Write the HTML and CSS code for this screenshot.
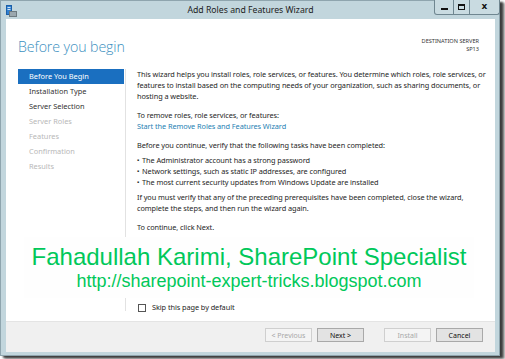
FILE: index.html
```html
<!DOCTYPE html>
<html lang="en">
    <head>
        <title>Add Roles and Features Wizard</title>
        <meta name="viewport" content="width=device-width, initial-scale=1">
        <link rel="stylesheet" href="styles.css">
    </head>
    <body>
        <div class="window">
            <header class="titlebar">
                <svg class="app-icon" width="11" height="12" viewBox="0 0 11 12">
                    <rect x="0.5" y="0.5" width="5" height="9" fill="#2f7fd0" stroke="#1b5fa8"/>
                    <rect x="1.5" y="2" width="3" height="1" fill="#cfe4f7"/>
                    <rect x="1.5" y="4" width="3" height="1" fill="#cfe4f7"/>
                    <rect x="3.5" y="6.5" width="7" height="5" fill="#9aa7ae" stroke="#6d7a80"/>
                </svg>
                <span class="title">Add Roles and Features Wizard</span>
                <div class="controls">
                    <span class="ctl"><i class="min"></i></span>
                    <span class="ctl"><i class="max"></i></span>
                    <span class="ctl close">x</span>
                </div>
            </header>
            <main class="client">
                <div class="page-head">
                    <h1>Before you begin</h1>
                    <div class="dest">DESTINATION SERVER<br>SP13</div>
                </div>
                <div class="wizard-body">
                    <nav class="steps">
                        <div class="step current">Before You Begin</div>
                        <div class="step">Installation Type</div>
                        <div class="step">Server Selection</div>
                        <div class="step off">Server Roles</div>
                        <div class="step off">Features</div>
                        <div class="step off">Confirmation</div>
                        <div class="step off">Results</div>
                    </nav>
                    <section class="content">
                        <p class="intro">This wizard helps you install roles, role services, or features. You determine which roles, role services, or features to install based on the computing needs of your organization, such as sharing documents, or hosting a website.</p>
                        <p>To remove roles, role services, or features:<br><a href="#">Start the Remove Roles and Features Wizard</a></p>
                        <p>Before you continue, verify that the following tasks have been completed:</p>
                        <ul>
                            <li>The Administrator account has a strong password</li>
                            <li>Network settings, such as static IP addresses, are configured</li>
                            <li>The most current security updates from Windows Update are installed</li>
                        </ul>
                        <p class="verify">If you must verify that any of the preceding prerequisites have been completed, close the wizard, complete the steps, and then run the wizard again.</p>
                        <p>To continue, click Next.</p>
                        <label class="skip"><span class="box"></span>Skip this page by default</label>
                    </section>
                </div>
            </main>
            <footer class="buttons">
                <button disabled>&lt; Previous</button>
                <button>Next &gt;</button>
                <button class="install" disabled>Install</button>
                <button>Cancel</button>
            </footer>
            <div class="watermark">
                <div class="name">Fahadullah Karimi, SharePoint Specialist</div>
                <div class="url">http://sharepoint-expert-tricks.blogspot.com</div>
            </div>
        </div>
    </body>
</html>
```

FILE: styles.css
```css
:root {
    --frame: #c2d6dd;
    --frame-edge: #8fa5ae;
    --heading: #3b8fc0;
    --selected: #1a6fc0;
    --text: #1e1e1e;
    --muted: #b8b8b8;
    --link: #1f7fb3;
    --footer: #f0f0f0;
    --green: #00c85a;
}
* { padding: 0; margin: 0; box-sizing: border-box; }
html, body { height: 100%; }
body { background: #fff; font-family: "Noto Sans", "Open Sans", sans-serif; color: var(--text); overflow: hidden; }

.window {
    position: relative;
    width: 500px; height: 356px;
    background: var(--frame);
    border: 1px solid var(--frame-edge);
    box-shadow: 3px 2px 2px rgba(40, 40, 40, 0.85), 5px 3px 2px rgba(80, 80, 80, 0.5);
    display: flex; flex-direction: column;
    padding: 0 4px 3px 5px;
}

/* title bar */
.titlebar { height: 18px; flex: none; display: flex; align-items: center; position: relative; }
.app-icon { margin: 1px 0 0 0; }
.title { position: absolute; left: 0; right: 0; text-align: center; top: 3px; font-size: 8.7px; color: #1c1c1c; pointer-events: none; }
.controls {
    position: absolute; right: -5px; top: -1px;
    display: flex; height: 15px;
    border: 1px solid #6f8690; border-top: none; border-radius: 0 0 3px 3px;
    background: #c9dbe1;
}
.ctl { width: 16px; display: flex; align-items: center; justify-content: center; border-left: 1px solid #6f8690; }
.ctl:first-child { border-left: none; width: 18px; }
.ctl.close { width: 30px; font: bold 9px "DejaVu Sans", sans-serif; color: #111; padding-bottom: 2px; }
.min { width: 7px; height: 2px; background: #111; margin-top: 4px; }
.max { width: 7px; height: 6px; border: 1px solid #111; border-top-width: 2px; }

/* client */
.client { flex: auto; background: #fff; display: flex; flex-direction: column; padding: 0 0 10px 0; }
.page-head { display: flex; justify-content: space-between; padding: 18px 16px 0 12px; height: 50px; }
h1 { font: 300 14.2px/19px "Open Sans", "Noto Sans", sans-serif; color: var(--heading); letter-spacing: -0.1px; }
.dest { font-size: 5.6px; line-height: 8px; text-align: right; color: #333; padding-top: 0; }

.wizard-body { flex: auto; display: flex; }
.steps { flex: none; width: 108px; margin-left: 12px; border-right: 1px solid #e2e2e2; }
.step { height: 15px; line-height: 15px; font-size: 7.4px; padding-left: 11px; color: #333; white-space: nowrap; }
.step.current { background: var(--selected); color: #fff; margin-right: 1px; }
.step.off { color: var(--muted); }

.content {
    flex: auto; padding: 0 6px 0 11px;
    display: flex; flex-direction: column;
    font-size: 7.35px; line-height: 11px; letter-spacing: -0.075px;
}
.content p { margin-top: 8px; }
.content p.intro { margin-top: 0; }
.content a { color: var(--link); text-decoration: none; }
.content ul { list-style: none; margin-top: 4px; }
.content li::before { content: "\25AA"; font-size: 6px; margin-right: 3px; vertical-align: 1px; }
.content p.verify { margin-top: 4px; }
.skip { margin-top: auto; display: flex; align-items: center; gap: 6px; margin-left: 1px; margin-bottom: -2px; }
.box { width: 8px; height: 8px; border: 1px solid #555; background: #fff; }

/* buttons */
.buttons {
    height: 31px; flex: none; background: var(--footer);
    border-top: 1px solid #e4e4e4;
    display: flex; justify-content: flex-end; align-items: flex-start;
    padding: 6px 12px 0 0; gap: 5px;
}
.buttons button {
    width: 47px; height: 14px;
    font: 7px "Noto Sans", sans-serif; color: #111;
    background: #e3e3e3; border: 1px solid #a9a9a9;
}
.buttons button:disabled { color: #a8a8a8; background: #f4f4f4; border-color: #cfcfcf; }
.buttons .install { margin-left: 15px; }

/* overlay text */
.watermark {
    position: absolute; left: 23px; top: 236px; width: 450px; height: 61px;
    background: #fefefe;
    font-family: "Liberation Sans", Arial, sans-serif; color: var(--green);
    text-align: center;
}
.name { font-size: 24px; line-height: 27px; margin-top: 6px; }
.url { font-size: 18px; line-height: 20px; margin-top: 1px; }
```
